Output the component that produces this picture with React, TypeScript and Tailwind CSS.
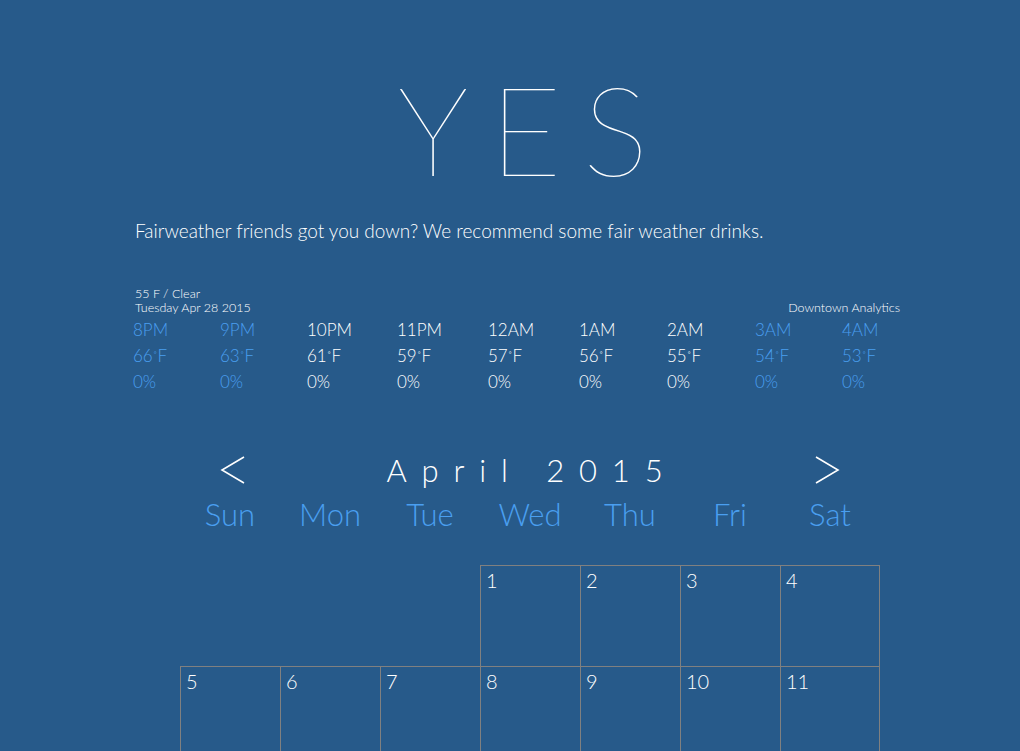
import { type JSX } from "react";

const hours = [
  { time: "8PM", temp: "66", rain: "0%", past: true, w: "w-[87px]" },
  { time: "9PM", temp: "63", rain: "0%", past: true, w: "w-[87px]" },
  { time: "10PM", temp: "61", rain: "0%", past: false, w: "w-[90px]" },
  { time: "11PM", temp: "59", rain: "0%", past: false, w: "w-[91px]" },
  { time: "12AM", temp: "57", rain: "0%", past: false, w: "w-[91px]" },
  { time: "1AM", temp: "56", rain: "0%", past: false, w: "w-[88px]" },
  { time: "2AM", temp: "55", rain: "0%", past: false, w: "w-[88px]" },
  { time: "3AM", temp: "54", rain: "0%", past: true, w: "w-[87px]" },
  { time: "4AM", temp: "53", rain: "0%", past: true, w: "w-[88px]" },
];

const days = ["Sun", "Mon", "Tue", "Wed", "Thu", "Fri", "Sat"];

const weeks: (number | null)[][] = [
  [null, null, null, 1, 2, 3, 4],
  [5, 6, 7, 8, 9, 10, 11],
];

function Chevron({ dir }: { dir: "left" | "right" }): JSX.Element {
  return (
    <svg width="26" height="30" viewBox="0 0 26 30" fill="none" stroke="white" strokeWidth="1.6">
      {dir === "left" ? <path d="M24 2 L2 15 L24 28" /> : <path d="M2 2 L24 15 L2 28" />}
    </svg>
  );
}

export default function App(): JSX.Element {
  return (
    <div className="min-h-[751px] bg-[#275a8a] text-white font-['Lato','Open_Sans',sans-serif] overflow-hidden">
      <header className="pt-[54px] pl-[135px] w-[900px]">
        <h1 className="text-center text-[124px] leading-[148px] font-extralight tracking-[0.17em] pl-[32px]">YES</h1>
        <p className="mt-[17px] text-[19px] font-light leading-[24px]">
          Fairweather friends got you down? We recommend some fair weather drinks.
        </p>
      </header>

      <section className="mt-[44px] pl-[133px]">
        <div className="flex w-[767px] items-end justify-between pl-[2px] text-[12.5px] leading-[14px] font-light">
          <div>
            <div>55 F / Clear</div>
            <div>Tuesday Apr 28 2015</div>
          </div>
          <div>Downtown Analytics</div>
        </div>
        <div className="mt-[2px] flex text-[17px] leading-[26px] font-light">
          {hours.map((h) => (
            <div key={h.time} className={(h.past ? "text-[#4a9ff0] " : "text-white ") + h.w}>
              <div>{h.time}</div>
              <div>
                {h.temp}
                <span className="text-[12px] align-top">˚</span>F
              </div>
              <div>{h.rain}</div>
            </div>
          ))}
        </div>
      </section>

      <section className="mt-[55px] ml-[180px] w-[700px]">
        <div className="flex items-center justify-between px-[40px] h-[40px]">
          <Chevron dir="left" />
          <div className="text-[31px] font-light tracking-[0.48em] pl-[4px]">April 2015</div>
          <Chevron dir="right" />
        </div>
        <div className="grid grid-cols-7 mt-[6px]">
          {days.map((d) => (
            <div key={d} className="text-center text-[31px] font-light leading-[36px] text-[#4a9ff0]">
              {d}
            </div>
          ))}
        </div>
        <div className="mt-[33px]">
          {weeks.map((week, wi) => (
            <div key={wi} className="grid grid-cols-7">
              {week.map((day, di) => (
                <div
                  key={di}
                  className={
                    day === null
                      ? "h-[101px]"
                      : "h-[101px] border-[#808080] border-l border-t " +
                        (di === 6 ? "border-r " : "") +
                        "pl-[5px] pt-[3px] text-[20px] leading-[22px] font-light"
                  }
                >
                  {day}
                </div>
              ))}
            </div>
          ))}
        </div>
      </section>
    </div>
  );
}
